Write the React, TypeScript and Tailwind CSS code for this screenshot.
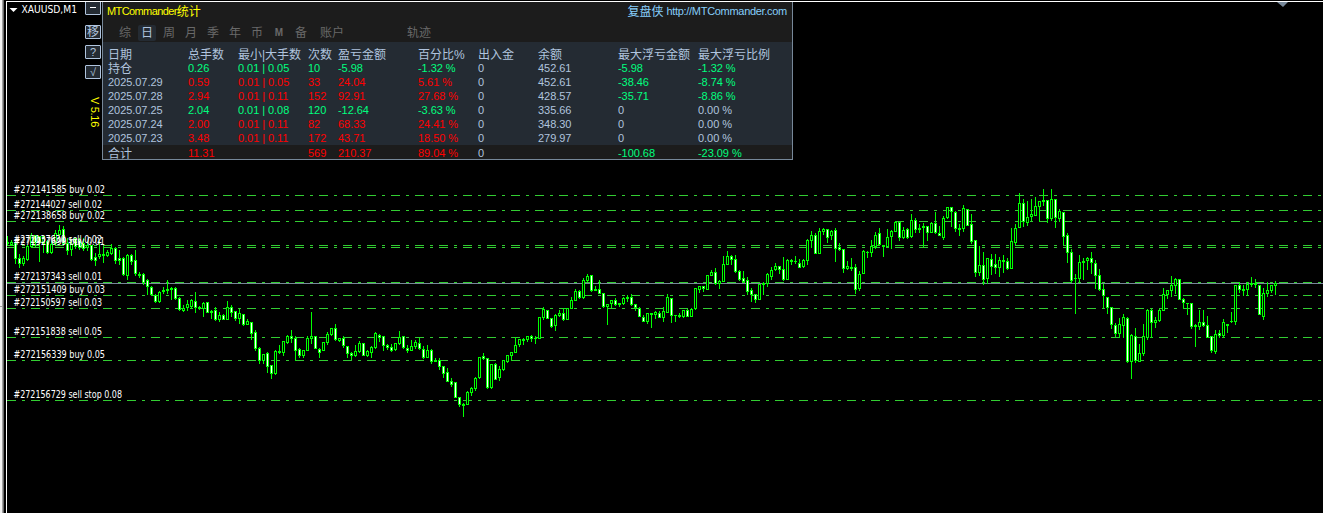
import type { ReactNode } from 'react';

const CJK = "font-['Liberation_Sans','Noto_Sans_CJK_SC',sans-serif]";

// high, body top, body bottom, low, 1 = falling candle
type Candle = [number, number, number, number, number];

const candles: Candle[] = [
  [236, 242, 243, 245, 0], [240, 242, 244, 245, 0], [243, 243, 258, 263, 1], [254, 258, 263, 267, 1],
  [256, 258, 263, 265, 0], [245, 246, 259, 260, 0], [233, 235, 246, 247, 0], [235, 235, 242, 246, 1],
  [236, 236, 242, 261, 1], [236, 236, 243, 252, 0], [240, 241, 252, 253, 1],
  [241, 244, 252, 253, 0], [230, 233, 243, 244, 0], [225, 230, 234, 240, 0], [226, 229, 243, 244, 1],
  [238, 243, 250, 254, 1], [239, 244, 249, 255, 0], [238, 238, 246, 248, 1], [238, 240, 247, 249, 1],
  [238, 243, 248, 250, 1], [241, 245, 247, 250, 0], [245, 245, 259, 260, 1], [253, 257, 260, 265, 1],
  [241, 254, 256, 258, 0], [246, 254, 255, 262, 0], [250, 252, 255, 256, 0], [244, 248, 253, 254, 0],
  [247, 248, 260, 263, 1], [250, 258, 260, 264, 1], [257, 258, 274, 275, 1], [254, 255, 275, 279, 0],
  [254, 255, 261, 264, 1], [250, 260, 273, 275, 1], [272, 274, 275, 277, 0], [273, 274, 282, 284, 1],
  [279, 280, 286, 294, 1], [286, 287, 294, 295, 1], [294, 295, 301, 302, 1], [291, 292, 301, 302, 0],
  [287, 290, 291, 293, 0], [280, 289, 290, 293, 0], [287, 288, 289, 299, 0], [287, 288, 298, 299, 1],
  [297, 298, 309, 310, 1], [305, 308, 310, 311, 0], [300, 304, 307, 310, 0], [299, 300, 306, 308, 0],
  [292, 301, 307, 312, 1], [306, 307, 308, 309, 1], [302, 303, 308, 316, 0], [302, 302, 312, 312, 1],
  [310, 311, 312, 318, 1], [307, 310, 319, 320, 1], [312, 315, 319, 321, 0], [314, 315, 319, 319, 1],
  [301, 307, 319, 319, 0], [305, 307, 312, 316, 1], [311, 311, 318, 320, 1], [309, 313, 318, 323, 0],
  [314, 314, 324, 325, 1], [319, 321, 324, 324, 0], [322, 322, 333, 339, 1], [330, 332, 348, 350, 1],
  [347, 348, 360, 363, 1], [354, 354, 360, 363, 0], [352, 353, 366, 372, 1], [365, 365, 373, 378, 1],
  [350, 351, 373, 374, 0], [345, 351, 352, 353, 0], [341, 341, 352, 355, 0], [335, 336, 342, 343, 0],
  [330, 336, 338, 342, 1], [336, 338, 350, 360, 1], [348, 349, 355, 357, 1], [350, 350, 355, 357, 0],
  [336, 338, 350, 350, 0], [312, 336, 338, 343, 0], [336, 336, 348, 348, 1], [348, 349, 352, 357, 1],
  [342, 342, 350, 350, 0], [332, 334, 342, 344, 0], [328, 328, 334, 335, 0], [324, 328, 339, 340, 1],
  [338, 338, 340, 341, 0], [336, 338, 345, 347, 1], [346, 346, 353, 357, 1], [352, 353, 355, 359, 1],
  [345, 351, 355, 356, 0], [341, 343, 351, 352, 0], [343, 343, 355, 355, 1], [350, 351, 355, 356, 0],
  [346, 347, 352, 357, 0], [332, 333, 347, 348, 0], [334, 335, 337, 341, 1], [336, 336, 345, 350, 1],
  [344, 345, 347, 349, 1], [344, 347, 350, 351, 1], [343, 343, 349, 350, 0], [331, 337, 343, 344, 0],
  [336, 336, 347, 348, 1], [345, 348, 350, 352, 1], [340, 346, 350, 350, 0], [340, 342, 346, 348, 0],
  [338, 343, 348, 349, 1], [346, 349, 357, 358, 1], [345, 350, 357, 357, 0], [349, 350, 361, 363, 1],
  [358, 360, 361, 361, 0], [358, 360, 366, 369, 1], [366, 366, 373, 377, 1], [368, 372, 381, 381, 1],
  [378, 381, 384, 386, 1], [382, 382, 397, 397, 1], [397, 397, 404, 406, 1], [403, 404, 405, 416, 1],
  [391, 392, 404, 404, 0], [387, 388, 392, 395, 0], [377, 378, 388, 390, 0], [357, 357, 377, 378, 0],
  [353, 356, 358, 359, 1], [358, 358, 387, 388, 1], [364, 364, 387, 388, 0], [363, 364, 379, 379, 1],
  [366, 369, 377, 380, 0], [360, 360, 369, 370, 0], [355, 355, 361, 362, 0], [352, 352, 355, 360, 0],
  [337, 345, 352, 352, 0], [339, 339, 344, 346, 0], [338, 339, 340, 344, 0], [336, 336, 339, 341, 0],
  [335, 336, 338, 341, 1], [336, 338, 338, 343, 0], [317, 317, 338, 338, 0], [307, 309, 317, 319, 0],
  [310, 310, 318, 318, 1], [318, 318, 326, 327, 1], [314, 315, 325, 330, 0], [310, 313, 315, 316, 0],
  [308, 313, 319, 320, 1], [308, 308, 319, 319, 0], [297, 300, 308, 308, 0], [289, 291, 300, 300, 0],
  [290, 291, 297, 298, 1], [278, 280, 297, 298, 0], [274, 276, 280, 281, 0], [275, 275, 290, 291, 1],
  [286, 289, 290, 290, 0], [280, 289, 293, 293, 1], [293, 293, 306, 307, 1], [304, 304, 306, 324, 0],
  [300, 300, 303, 307, 0], [298, 300, 304, 305, 1], [303, 303, 304, 306, 0], [297, 298, 303, 304, 0],
  [295, 297, 298, 301, 0], [294, 297, 304, 305, 1], [304, 304, 307, 310, 1], [307, 308, 316, 316, 1],
  [315, 317, 321, 321, 1], [313, 313, 321, 323, 0], [313, 313, 314, 327, 0], [311, 312, 314, 318, 0],
  [311, 313, 317, 317, 1], [307, 311, 317, 321, 0], [294, 297, 312, 312, 0], [298, 298, 315, 322, 1],
  [315, 315, 315, 321, 0], [313, 315, 316, 317, 0], [310, 310, 316, 317, 0], [309, 310, 316, 316, 1],
  [308, 309, 316, 316, 0], [288, 288, 308, 309, 0], [286, 286, 289, 292, 0], [286, 286, 288, 291, 1],
  [275, 275, 289, 289, 0], [270, 272, 275, 275, 0], [268, 272, 283, 284, 1], [280, 281, 283, 288, 0],
  [256, 264, 281, 281, 0], [251, 256, 264, 264, 0], [255, 256, 259, 264, 1], [255, 259, 271, 272, 1],
  [270, 271, 279, 280, 1], [271, 278, 281, 282, 1], [277, 280, 291, 294, 1], [288, 290, 294, 301, 1],
  [294, 294, 299, 302, 1], [284, 284, 299, 299, 0], [282, 283, 284, 294, 0], [273, 274, 283, 286, 0],
  [267, 270, 276, 279, 0], [263, 266, 269, 270, 0], [266, 266, 269, 273, 1], [257, 269, 279, 280, 1],
  [259, 260, 279, 279, 0], [259, 260, 261, 264, 0], [256, 261, 261, 263, 0], [259, 263, 267, 267, 1],
  [259, 260, 266, 267, 0], [239, 240, 260, 264, 0], [231, 235, 240, 247, 0], [233, 235, 253, 253, 1],
  [228, 231, 253, 253, 0], [228, 229, 231, 234, 0], [229, 229, 237, 242, 1], [230, 231, 235, 239, 0],
  [228, 230, 248, 261, 1], [243, 247, 249, 250, 1], [249, 249, 268, 272, 1], [261, 266, 268, 269, 0],
  [258, 267, 268, 270, 0], [264, 267, 289, 293, 1], [271, 274, 288, 290, 0], [250, 251, 273, 273, 0],
  [251, 252, 252, 257, 0], [240, 246, 252, 256, 0], [232, 235, 246, 248, 0], [228, 233, 244, 244, 1],
  [245, 245, 246, 256, 0], [229, 237, 246, 246, 0], [230, 231, 236, 248, 0], [221, 222, 231, 231, 0],
  [222, 222, 237, 240, 1], [227, 230, 237, 238, 0], [228, 229, 237, 238, 1], [214, 220, 236, 237, 0],
  [218, 220, 229, 232, 1], [224, 228, 229, 232, 0], [223, 226, 227, 246, 0], [226, 226, 232, 240, 1],
  [222, 223, 232, 232, 0], [212, 223, 232, 233, 1], [226, 233, 235, 235, 1], [216, 218, 237, 239, 0],
  [207, 207, 217, 218, 0], [207, 207, 211, 226, 1], [211, 212, 228, 231, 1], [224, 228, 229, 235, 0],
  [205, 208, 228, 231, 0], [209, 209, 225, 225, 1], [214, 224, 241, 243, 1], [240, 240, 272, 276, 1],
  [246, 265, 272, 275, 0], [252, 265, 279, 284, 1], [258, 258, 278, 283, 0], [254, 259, 266, 274, 1],
  [254, 264, 267, 273, 1], [257, 260, 267, 276, 0], [255, 260, 261, 272, 0], [258, 261, 268, 269, 1],
  [228, 241, 268, 268, 0], [224, 228, 242, 244, 0], [193, 203, 227, 227, 0], [199, 203, 221, 226, 1],
  [201, 217, 222, 225, 0], [199, 214, 216, 220, 0], [197, 206, 215, 215, 0], [201, 201, 206, 221, 0],
  [189, 200, 201, 205, 0], [200, 200, 218, 222, 1], [189, 199, 218, 220, 0], [199, 199, 217, 227, 1],
  [209, 211, 218, 221, 0], [212, 212, 236, 244, 1], [233, 235, 252, 262, 1], [249, 252, 280, 282, 1],
  [274, 278, 278, 313, 0], [255, 262, 278, 282, 0], [258, 261, 262, 279, 0], [257, 258, 260, 269, 0],
  [252, 258, 262, 273, 1], [260, 263, 275, 288, 1], [269, 275, 289, 290, 1], [284, 289, 295, 307, 1],
  [297, 297, 307, 313, 1], [307, 307, 324, 328, 1], [323, 325, 333, 336, 1], [318, 324, 333, 337, 0],
  [314, 317, 325, 337, 0], [317, 318, 361, 362, 1], [334, 335, 361, 378, 0], [328, 336, 360, 362, 1],
  [344, 353, 361, 361, 0], [324, 336, 353, 355, 0], [309, 310, 337, 339, 0], [309, 310, 322, 337, 1],
  [317, 320, 322, 327, 0], [309, 310, 320, 321, 0], [288, 294, 310, 310, 0], [290, 290, 294, 298, 0],
  [276, 285, 290, 296, 0], [278, 279, 285, 293, 0], [279, 279, 299, 299, 1], [298, 299, 302, 308, 1],
  [303, 303, 303, 314, 0], [303, 303, 326, 328, 1], [324, 325, 326, 346, 0], [310, 322, 326, 329, 0],
  [310, 322, 325, 326, 1], [316, 325, 337, 337, 1], [336, 336, 350, 352, 1], [330, 334, 351, 353, 0],
  [330, 333, 335, 337, 1], [319, 322, 335, 337, 0], [324, 324, 325, 332, 0], [312, 321, 321, 322, 0],
  [285, 285, 321, 324, 0], [282, 285, 289, 292, 1], [285, 289, 290, 295, 0], [282, 284, 289, 295, 0],
  [277, 283, 284, 286, 0], [279, 283, 284, 287, 0], [285, 285, 314, 314, 1], [288, 293, 316, 319, 0],
  [282, 290, 293, 296, 0], [285, 285, 290, 292, 0], [281, 283, 285, 294, 0],
];

interface Order {
  y: number;
  label: string;
  width: number;
}

const orders: Order[] = [
  { y: 195, label: '#272141585 buy 0.02', width: 91.5 },
  { y: 210, label: '#272144027 sell 0.02', width: 88.5 },
  { y: 221, label: '#272138658 buy 0.02', width: 91.5 },
  { y: 245, label: '#272137630 sell 0.02', width: 88.5 },
  { y: 247, label: '#271927699 buy 0.01', width: 91.5 },
  { y: 282, label: '#272137343 sell 0.01', width: 88.5 },
  { y: 295, label: '#272151409 buy 0.03', width: 91.5 },
  { y: 308, label: '#272150597 sell 0.03', width: 88.5 },
  { y: 337, label: '#272151838 sell 0.05', width: 88.5 },
  { y: 360, label: '#272156339 buy 0.05', width: 91.5 },
  { y: 400, label: '#272156729 sell stop 0.08', width: 108.5 },
];

function Chart() {
  return (
    <svg
      width="1323"
      height="513"
      viewBox="0 0 1323 513"
      className="block font-['DejaVu_Sans_Condensed','DejaVu_Sans',sans-serif]"
    >
      <g shapeRendering="crispEdges">
        {/* Order levels */}
        {orders.map((o) => (
          <line key={o.y} x1="7" x2="1323" y1={o.y + 0.5} y2={o.y + 0.5} stroke="#32cd32" strokeDasharray="9 6 3 6" />
        ))}
        <rect x="7" y="283" width="1316" height="1" fill="#778899" />

        {candles.map(([high, top, bottom, low, down], i) => {
          const x = 7 + i * 4;
          return (
            <g key={i}>
              <rect x={x} y={high} width="1" height={low - high + 1} fill="#0f0" />
              <rect x={x - 1} y={top} width="3" height={bottom - top + 1} fill="#0f0" />
              {bottom - top > 1 && (
                <rect x={x} y={top + 1} width="1" height={bottom - top - 1} fill={down ? '#fff' : '#000'} />
              )}
            </g>
          );
        })}

        {/* Window edge */}
        <rect width="2" height="513" fill="#f0f0f0" />
        <rect y="306" width="2" height="1" fill="#a0a0a0" />
        <rect x="2" width="1" height="513" fill="#a0a0a0" />
        <rect x="3" width="1" height="513" fill="#696969" />
        <rect x="6" y="1" width="1317" height="1" fill="#fff" />
        <rect x="6" y="1" width="1" height="512" fill="#fff" />
      </g>

      {orders.map((o) => (
        <text key={o.y} x="13.5" y={o.y - 2} fontSize="10" fill="#fff" textLength={o.width} lengthAdjust="spacingAndGlyphs">
          {o.label}
        </text>
      ))}

      <path d="M9.500 8h8l-4 4z" fill="#fff" />
      <text x="21.5" y="13" fontSize="10.5" fill="#fff" textLength="55.5" lengthAdjust="spacingAndGlyphs">
        XAUUSD,M1
      </text>
      <path d="M1277 2h11l-5 5z" fill="#778899" />
    </svg>
  );
}

function ToolButton({ children }: { children: ReactNode }) {
  return (
    <button className="flex h-[14px] w-4 items-center justify-center overflow-hidden rounded-[1px] border border-[#b0c4de] bg-[#242b33] text-[11px] leading-none text-[#b0c4de]">
      {children}
    </button>
  );
}

const tabs = [
  { label: '综', width: 'w-[22px]' },
  { label: '日', width: 'w-[22px]', active: true },
  { label: '周', width: 'w-[22px]' },
  { label: '月', width: 'w-[22px]' },
  { label: '季', width: 'w-[22px]' },
  { label: '年', width: 'w-[22px]' },
  { label: '币', width: 'w-[22px]' },
  { label: 'M', width: 'w-[22px]' },
  { label: '备', width: 'w-[22px]' },
  { label: '账户', width: 'w-[40px]' },
  { label: '轨迹', width: 'ml-[47px] w-[40px]' },
];

const headers = ['日期', '总手数', '最小|大手数', '次数', '盈亏金额', '百分比%', '出入金', '余额', '最大浮亏金额', '最大浮亏比例'];

const rows = [
  ['持仓', '0.26', '0.01 | 0.05', '10', '-5.98', '-1.32 %', '0', '452.61', '-5.98', '-1.32 %'],
  ['2025.07.29', '0.59', '0.01 | 0.05', '33', '24.04', '5.61 %', '0', '452.61', '-38.46', '-8.74 %'],
  ['2025.07.28', '2.94', '0.01 | 0.11', '152', '92.91', '27.68 %', '0', '428.57', '-35.71', '-8.86 %'],
  ['2025.07.25', '2.04', '0.01 | 0.08', '120', '-12.64', '-3.63 %', '0', '335.66', '0', '0.00 %'],
  ['2025.07.24', '2.00', '0.01 | 0.11', '82', '68.33', '24.41 %', '0', '348.30', '0', '0.00 %'],
  ['2025.07.23', '3.48', '0.01 | 0.11', '172', '43.71', '18.50 %', '0', '279.97', '0', '0.00 %'],
];

const total = ['合计', '11.31', '', '569', '210.37', '89.04 %', '0', '', '-100.68', '-23.09 %'];

const GRID = 'grid grid-cols-[80px_50px_70px_30px_80px_60px_60px_80px_80px_94px] pl-[5px] whitespace-nowrap';

function cellColor(row: string[], col: number) {
  if (col >= 1 && col <= 5) return row[4].startsWith('-') ? 'text-[#00ff7f]' : 'text-[#f00]';
  if (col >= 8 && row[8].startsWith('-')) return 'text-[#00ff7f]';
  return 'text-[#b0c4de]';
}

function Row({ row, className }: { row: string[]; className: string }) {
  return (
    <div className={`${GRID} ${className}`}>
      {row.map((cell, i) => (
        <span
          key={i}
          className={`${cellColor(row, i)} ${i === 0 && cell.length === 2 ? 'pt-px text-[12px]' : 'text-[11px] tracking-[-0.05px]'}`}
        >
          {cell}
        </span>
      ))}
    </div>
  );
}

function StatsPanel() {
  return (
    <section className="flex h-[158px] w-[691px] flex-col border border-t-0 border-[#778899] bg-[#1c1c1c]">
      <header className="flex h-[19px] items-center justify-between pr-[5px] pl-[4px] text-[12px] leading-none whitespace-nowrap">
        <h1 className="flex items-center text-[#ff0]">
          <span className="text-[11px] tracking-[-0.6px]">MTCommander</span>
          <span>统计</span>
        </h1>
        <p className="flex items-center text-[#87cefa]">
          <span>复盘侠</span>
          <span className="ml-[3px] text-[11px] tracking-[-0.3px]">http://MTCommander.com</span>
        </p>
      </header>

      <nav className="flex h-[21px] items-end pb-px pl-[11px] text-[12px] leading-none text-[#696969]">
        {tabs.map((tab) => (
          <span key={tab.label} className={`flex justify-center ${tab.width}`}>
            <span
              className={
                tab.active
                  ? 'flex h-4 w-[18px] items-center justify-center rounded-[2px] bg-[#242b33] text-[#b0c4de]'
                  : tab.label === 'M'
                    ? 'flex h-4 items-center text-[10px] font-bold'
                    : 'flex h-4 items-center'
              }
            >
              {tab.label}
            </span>
          </span>
        ))}
      </nav>

      <div className="h-[103px] bg-[#242b33] pt-[5px]">
        <div className={`${GRID} h-[14px] text-[12px] leading-[16px] text-[#b0c4de]`}>
          {headers.map((h) => (
            <span key={h}>{h}</span>
          ))}
        </div>
        {rows.map((row) => (
          <Row key={row[0]} row={row} className="h-[14px] leading-[14px]" />
        ))}
      </div>
      <Row row={total} className="h-[14px] leading-[16px]" />
    </section>
  );
}

export default function App() {
  return (
    <main className={`relative h-[513px] w-[1323px] overflow-hidden bg-black ${CJK}`}>
      <Chart />
      <div className="absolute top-[2px] left-[85px] flex gap-px">
        <div className="flex w-4 flex-col gap-[6px]">
          <div className="mb-1 flex h-[13px] items-end overflow-hidden">
            <ToolButton>
              <span className="mb-[2px] h-px w-[6px] bg-white" />
            </ToolButton>
          </div>
          <ToolButton>
            <span className="text-[12px]">移</span>
          </ToolButton>
          <ToolButton>?</ToolButton>
          <ToolButton>√</ToolButton>
          <span className="mt-[12px] ml-[5px] text-[11px] leading-[12px] tracking-[-0.3px] text-[#ff0] [writing-mode:vertical-rl]">
            V 5.16
          </span>
        </div>
        <StatsPanel />
      </div>
    </main>
  );
}
